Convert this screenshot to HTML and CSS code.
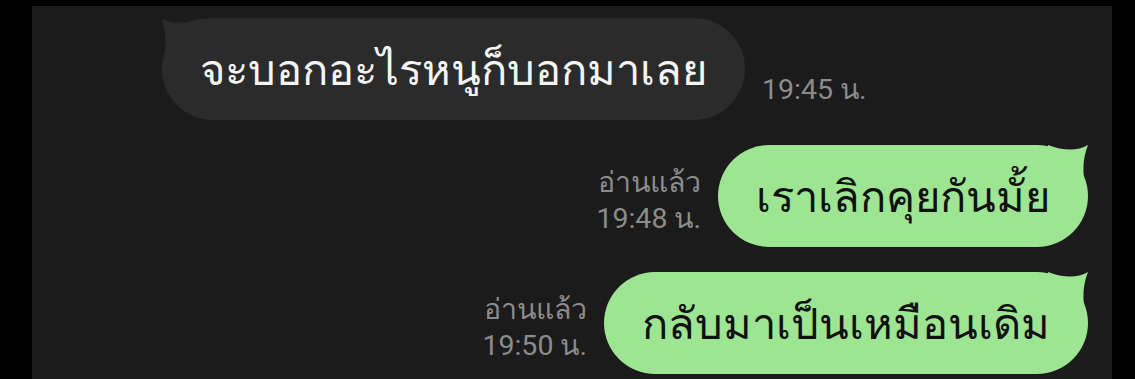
FILE: index.html
```html
<!DOCTYPE html>
<html>

<head>
  <meta charset="UTF-8">
  <link rel="stylesheet" href="styles.css">
</head>

<body>
  <div class="chat">

    <div class="msg msg-in">
      <div class="bubble bubble-in">
        <svg class="tail tail-in" viewBox="0 0 40 44" width="40" height="44">
          <path d="M0 0 Q16 9 40 0 L40 44 L2 44 Q8 20 0 0 Z" />
        </svg>
        <span class="bubble-text">จะบอกอะไรหนูก็บอกมาเลย</span>
      </div>
      <div class="meta">
        <span>19:45 น.</span>
      </div>
    </div>

    <div class="msg msg-out">
      <div class="meta meta-out">
        <span>อ่านแล้ว</span>
        <span>19:48 น.</span>
      </div>
      <div class="bubble bubble-out">
        <svg class="tail tail-out" viewBox="0 0 40 44" width="40" height="44">
          <path d="M40 0 Q24 9 0 0 L0 44 L38 44 Q32 20 40 0 Z" />
        </svg>
        <span class="bubble-text">เราเลิกคุยกันมั้ย</span>
      </div>
    </div>

    <div class="msg msg-out">
      <div class="meta meta-out">
        <span>อ่านแล้ว</span>
        <span>19:50 น.</span>
      </div>
      <div class="bubble bubble-out">
        <svg class="tail tail-out" viewBox="0 0 40 44" width="40" height="44">
          <path d="M40 0 Q24 9 0 0 L0 44 L38 44 Q32 20 40 0 Z" />
        </svg>
        <span class="bubble-text">กลับมาเป็นเหมือนเดิม</span>
      </div>
    </div>

  </div>
</body>

</html>
```

FILE: styles.css
```css
body {
  margin: 0;
  background: #000;
  font-family: 'Noto Sans', 'DejaVu Sans', sans-serif;
}

.chat {
  margin: 6px 0 0 32px;
  width: 1080px;
  height: 373px;
  background: #1b1b1b;
  overflow: hidden;
  padding: 12px 24px 0 130px;
  box-sizing: border-box;
}

.msg {
  display: flex;
  align-items: flex-end;
  gap: 17px;
  margin-bottom: 25px;
}

.msg-out {
  justify-content: flex-end;
}

.bubble {
  position: relative;
  height: 102px;
  padding: 0 38px;
  border-radius: 51px;
  display: flex;
  align-items: center;
  box-sizing: border-box;
}

.bubble-in {
  background: #2b2b2b;
  color: #f4f4f4;
}

.bubble-out {
  background: #9ee593;
  color: #111;
}

.bubble-text {
  font-size: 43.5px;
  white-space: nowrap;
}

/* หางของบับเบิล */
.tail {
  position: absolute;
  top: 0;
}

.tail-in {
  left: -1px;
  fill: #2b2b2b;
}

.tail-out {
  right: 0;
  fill: #9ee593;
}

.meta {
  display: flex;
  flex-direction: column;
  font-family: 'Roboto', sans-serif;
  font-size: 28.5px;
  line-height: 36px;
  color: #8b8b8b;
  padding-bottom: 12px;
}

.meta-out {
  align-items: flex-end;
  padding-bottom: 10px;
}
```
